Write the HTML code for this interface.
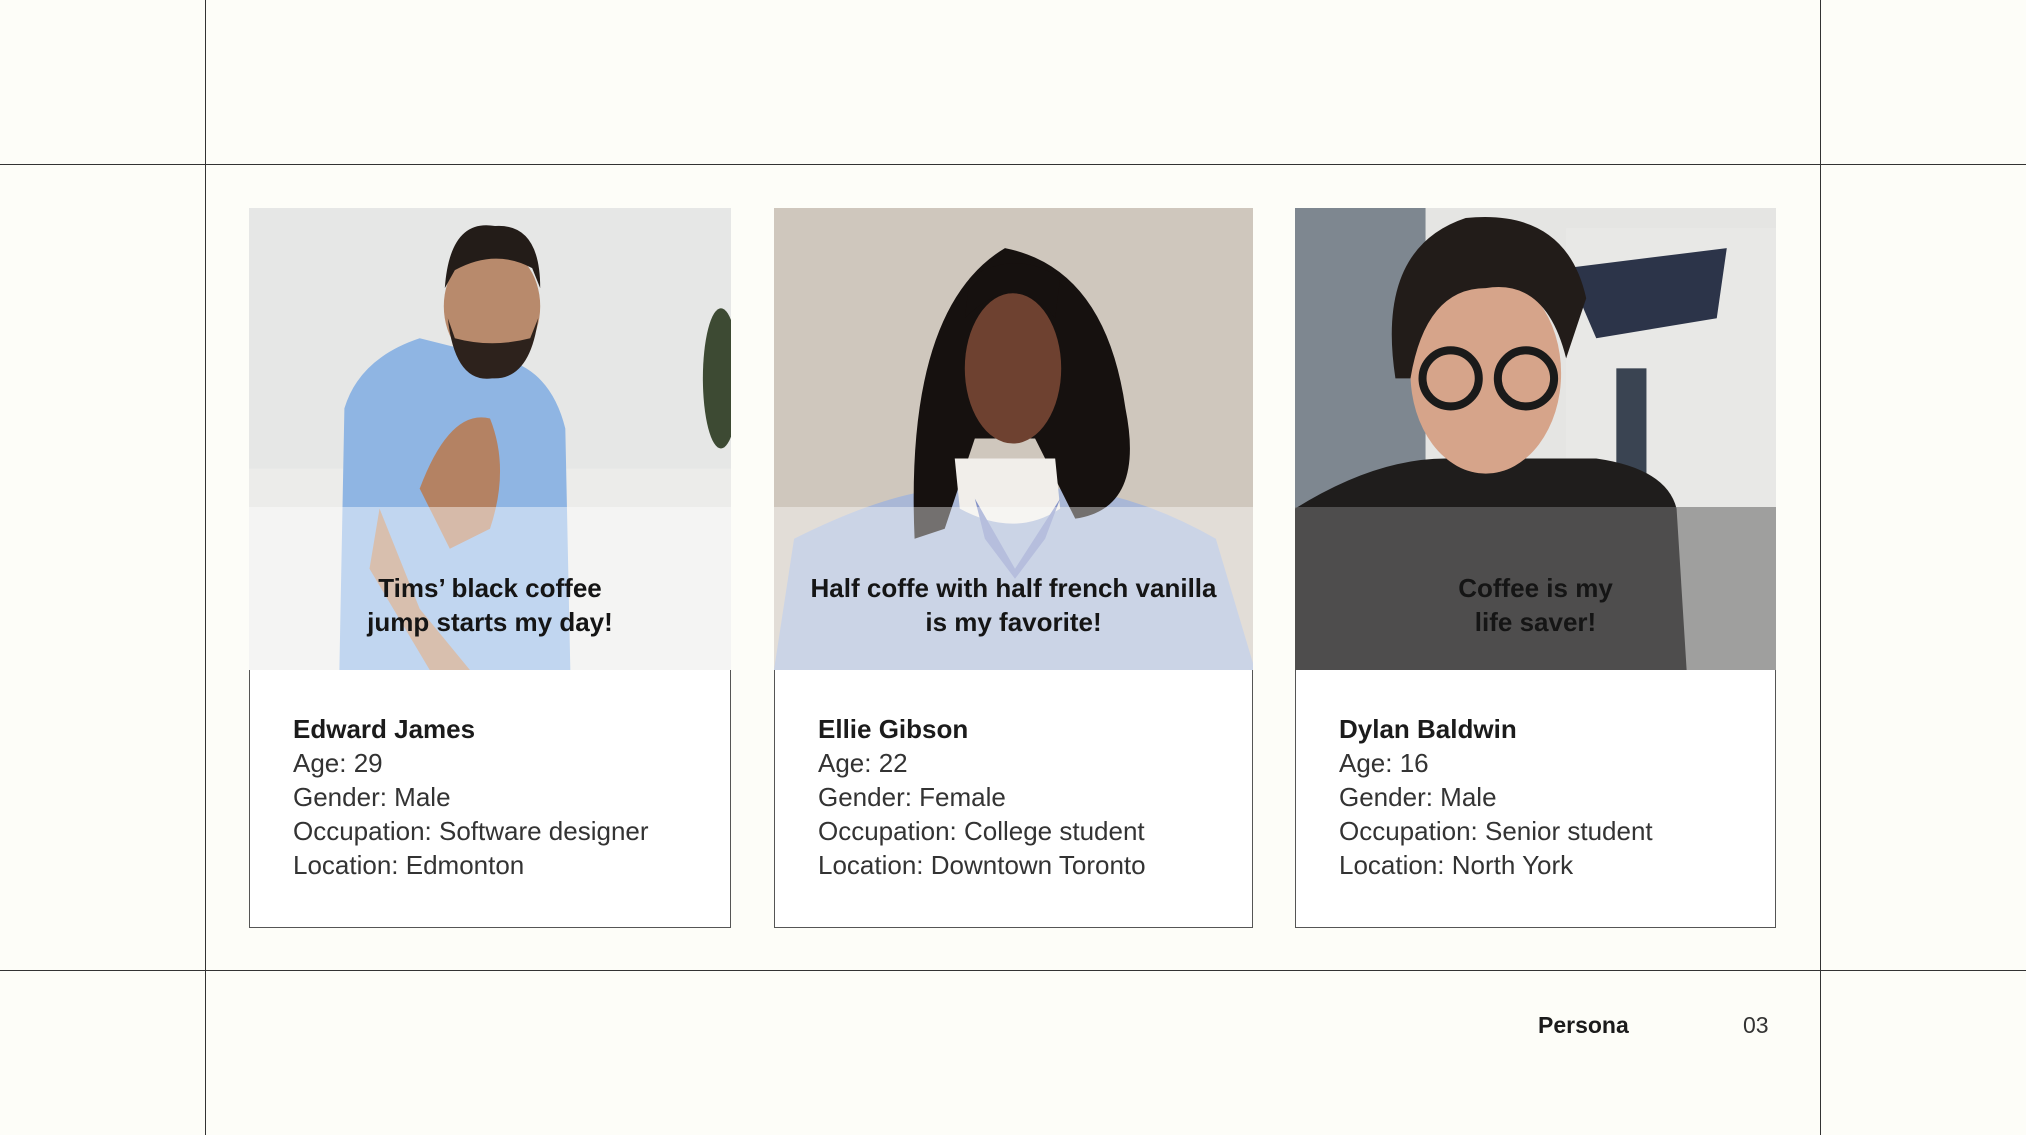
<!DOCTYPE html>
<html><head><meta charset="utf-8"><style>
*{margin:0;padding:0;box-sizing:border-box}
body{width:2026px;height:1135px;background:#fdfdf8;position:relative;overflow:hidden;font-family:"Liberation Sans",sans-serif;color:#1b1b1b}
.v{position:absolute;top:0;width:1px;height:1135px;background:#333}
.h{position:absolute;left:0;height:1px;width:2026px;background:#333}
.card{position:absolute;top:208px;height:720px;border:1px solid #555;background:#fff}
.photo{position:absolute;left:-1px;top:-1px;width:calc(100% + 2px);height:462px;overflow:hidden}
.photo svg{position:absolute;left:0;top:0}
.ov{position:absolute;left:0;top:299px;width:100%;height:163px}
.q{position:absolute;left:0;width:100%;top:362px;text-align:center;font-weight:bold;font-size:26px;line-height:34px;color:#151515}
.info{position:absolute;left:43px;top:503px;font-size:26px;line-height:34px;color:#333}
.info b{color:#1b1b1b}
</style></head><body>
<div class="v" style="left:205px"></div>
<div class="v" style="left:1820px"></div>
<div class="h" style="top:164px"></div>
<div class="h" style="top:970px"></div>

<div class="card" style="left:249px;width:482px">
 <div class="photo">
  <svg width="484" height="462" viewBox="0 0 482 461" preserveAspectRatio="none">
   <rect width="482" height="461" fill="#e6e7e6"/>
   <rect x="0" y="260" width="482" height="201" fill="#ececea"/>
   <ellipse cx="470" cy="170" rx="18" ry="70" fill="#3d4a33"/>
   <path d="M90 461 L95 200 Q110 150 170 130 L250 150 Q300 160 315 220 L320 461Z" fill="#8fb5e3"/>
   <ellipse cx="242" cy="98" rx="48" ry="60" fill="#b88a6c"/>
   <path d="M195 80 Q200 10 245 18 Q290 15 290 80 L282 60 Q245 40 205 62Z" fill="#231c18"/>
   <path d="M198 110 Q205 175 242 170 Q280 172 288 110 L280 130 Q242 140 205 130Z" fill="#2d221c"/>
   <path d="M170 280 Q200 200 240 210 Q260 260 240 320 L200 340Z" fill="#b48263"/>
   <path d="M130 300 L170 400 L220 461 L180 461 L120 360Z" fill="#b88a6c"/>
  </svg>
  <div class="ov" style="background:rgba(255,255,255,.45)"></div>
 </div>
 <div class="q">Tims’ black coffee<br>jump starts my day!</div>
 <div class="info"><b>Edward James</b><br>Age: 29<br>Gender: Male<br>Occupation: Software designer<br>Location: Edmonton</div>
</div>

<div class="card" style="left:774px;width:479px">
 <div class="photo">
  <svg width="481" height="462" viewBox="0 0 479 461" preserveAspectRatio="none">
   <rect width="479" height="461" fill="#cfc7bd"/>
   <path d="M0 461 L20 330 Q120 280 180 280 L300 280 Q370 290 440 330 L479 461Z" fill="#a9b7d6"/>
   <path d="M140 330 Q130 100 230 40 Q330 60 350 200 Q370 300 300 310 L260 230 L200 230 L170 320Z" fill="#16110f"/>
   <path d="M185 300 L180 250 L280 250 L285 300 Q240 330 185 300Z" fill="#f1eeea"/>
   <ellipse cx="238" cy="160" rx="48" ry="75" fill="#6e4130"/>
   <path d="M190 110 Q240 60 280 110 L285 70 Q240 40 195 70Z" fill="#16110f"/>
   <path d="M200 290 L240 360 L285 290 L270 330 L240 370 L210 330Z" fill="#8593c7"/>
  </svg>
  <div class="ov" style="background:rgba(255,255,255,.4)"></div>
 </div>
 <div class="q">Half coffe with half french vanilla<br>is my favorite!</div>
 <div class="info"><b>Ellie Gibson</b><br>Age: 22<br>Gender: Female<br>Occupation: College student<br>Location: Downtown Toronto</div>
</div>

<div class="card" style="left:1295px;width:481px">
 <div class="photo">
  <svg width="483" height="462" viewBox="0 0 481 461" preserveAspectRatio="none">
   <rect width="481" height="461" fill="#e5e5e3"/>
   <rect x="0" y="0" width="130" height="461" fill="#7e8790"/>
   <rect x="270" y="20" width="211" height="441" fill="#e8e8e6"/>
   <path d="M270 60 L430 40 L420 110 L300 130Z" fill="#2c3449"/>
   <rect x="320" y="160" width="30" height="120" fill="#3a4452"/>
   <path d="M0 461 L0 300 Q80 250 150 250 L300 250 Q370 260 380 300 L390 461Z" fill="#1f1d1c"/>
   <ellipse cx="190" cy="165" rx="75" ry="100" fill="#d6a48a"/>
   <path d="M100 170 Q80 40 170 10 Q270 0 290 90 L270 150 Q250 70 190 80 Q130 80 115 170Z" fill="#221c19"/>
   <circle cx="155" cy="170" r="28" fill="none" stroke="#1a1a1a" stroke-width="8"/>
   <circle cx="230" cy="170" r="28" fill="none" stroke="#1a1a1a" stroke-width="8"/>
  </svg>
  <div class="ov" style="background:rgba(110,110,110,.6)"></div>
 </div>
 <div class="q">Coffee is my<br>life saver!</div>
 <div class="info"><b>Dylan Baldwin</b><br>Age: 16<br>Gender: Male<br>Occupation: Senior student<br>Location: North York</div>
</div>

<div style="position:absolute;left:1538px;top:1012px;font-size:23px;font-weight:bold">Persona</div>
<div style="position:absolute;left:1743px;top:1012px;font-size:23px;color:#333">03</div>
</body></html>
